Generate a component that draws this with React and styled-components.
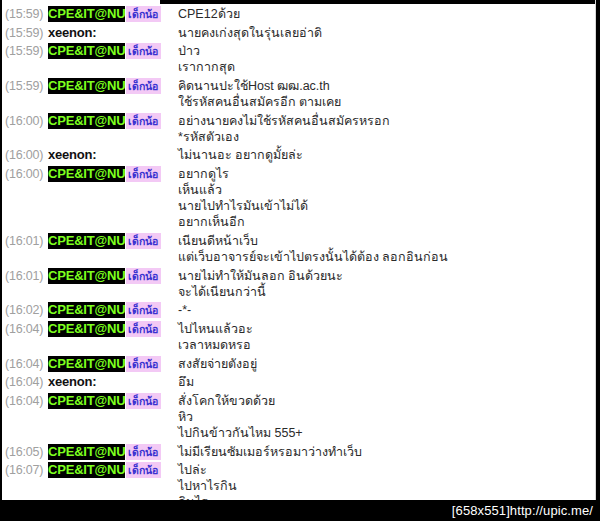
import React from 'react';
import styled, { createGlobalStyle } from 'styled-components';

const GlobalStyle = createGlobalStyle`
  html, body {
    margin: 0;
    padding: 0;
    background: #000000;
  }
`;

const Frame = styled.div`
  width: 600px;
  height: 521px;
  background: #000000;
  display: flex;
  flex-direction: column;
  overflow: hidden;
`;

const Panel = styled.div`
  height: 500px;
  margin-right: 4px;
  background: #ffffff;
  border-left: 2px solid #000000;
  border-right: 1px solid #d8d8d8;
  overflow: hidden;
  display: flex;
  flex-direction: column;
`;

const TopEdge = styled.div`
  display: flex;
  height: 4px;
  flex-shrink: 0;
`;

const TopBlack = styled.div`
  flex: 1;
  margin-left: 158px;
  margin-right: -1px;
  background: #000000;
`;

const Log = styled.div`
  padding-top: 2px;
  display: flex;
  flex-direction: column;
  gap: 2.7px;
`;

const Row = styled.div`
  display: grid;
  grid-template-columns: 46px 130px 1fr;
  line-height: 16px;
`;

const Time = styled.span`
  padding-left: 3px;
  height: 16px;
  color: #a0a0a0;
  font-family: 'Liberation Sans', Arial, sans-serif;
  font-size: 12.5px;
  letter-spacing: -0.2px;
`;

const Who = styled.div`
  display: flex;
  align-items: flex-start;
  gap: 1px;
  height: 16px;
`;

const Nick = styled.span`
  display: inline-block;
  height: 16px;
  line-height: 16px;
  background: ${p => (p.$tagged ? '#000000' : 'transparent')};
  color: ${p => (p.$tagged ? '#7dff1e' : '#111111')};
  font-family: 'Liberation Sans', Arial, sans-serif;
  font-weight: bold;
  font-size: 13px;
  letter-spacing: -0.2px;
`;

const Tag = styled.span`
  display: inline-block;
  height: 16px;
  line-height: 16px;
  padding: 0 3px 0 2px;
  white-space: nowrap;
  background: #f3c9f5;
  color: #3a32d0;
  font-family: Tahoma, 'DejaVu Sans', sans-serif;
  font-weight: bold;
  font-size: 10.5px;
`;

const Message = styled.div`
  display: flex;
  flex-direction: column;
  color: #2b2b2b;
  font-family: Tahoma, 'Liberation Sans', 'Noto Sans', sans-serif;
  font-size: 12.5px;
`;

const Line = styled.div`
  height: 16px;
  line-height: 16px;
  white-space: nowrap;
`;

const Bottom = styled.div`
  flex: 1;
  display: flex;
  align-items: center;
  justify-content: flex-end;
  padding-right: 7px;
  color: #ffffff;
  font-family: 'Liberation Sans', Arial, sans-serif;
  font-size: 13px;
  letter-spacing: 0.1px;
`;

const CPE = 'CPE&IT@NU';

const messages = [
  { t: '15:59', n: CPE, m: ['CPE12ด้วย'] },
  { t: '15:59', n: 'xeenon:', m: ['นายคงเก่งสุดในรุ่นเลยอ่าดิ'] },
  { t: '15:59', n: CPE, m: ['ป่าว', 'เรากากสุด'] },
  { t: '15:59', n: CPE, m: ['คิดนานปะใช้Host ฒฒ.ac.th', 'ใช้รหัสคนอื่นสมัครอีก ตามเคย'] },
  { t: '16:00', n: CPE, m: ['อย่างนายคงไม่ใช้รหัสคนอื่นสมัครหรอก', '*รหัสตัวเอง'] },
  { t: '16:00', n: 'xeenon:', m: ['ไม่นานอะ อยากดูมั้ยล่ะ'] },
  { t: '16:00', n: CPE, m: ['อยากดูไร', 'เห็นแล้ว', 'นายไปทำไรมันเข้าไม่ได้', 'อยากเห็นอีก'] },
  { t: '16:01', n: CPE, m: ['เนียนดีหน้าเว็บ', 'แต่เว็บอาจารย์จะเข้าไปตรงนั้นได้ต้อง ลอกอินก่อน'] },
  { t: '16:01', n: CPE, m: ['นายไม่ทำให้มันลอก อินด้วยนะ', 'จะได้เนียนกว่านี้'] },
  { t: '16:02', n: CPE, m: ['-*-'] },
  { t: '16:04', n: CPE, m: ['ไปไหนแล้วอะ', 'เวลาหมดหรอ'] },
  { t: '16:04', n: CPE, m: ['สงสัยจ่ายตังอยู่'] },
  { t: '16:04', n: 'xeenon:', m: ['อึม'] },
  { t: '16:04', n: CPE, m: ['สั่งโคกให้ขวดด้วย', 'หิว', 'ไปกินข้าวกันไหม 555+'] },
  { t: '16:05', n: CPE, m: ['ไม่มีเรียนซัมเมอร์หรอมาว่างทำเว็บ'] },
  { t: '16:07', n: CPE, m: ['ไปล่ะ', 'ไปหาไรกิน', 'กินไร'] },
];

export default function App() {
  return (
    <>
      <GlobalStyle />
      <Frame>
        <Panel>
          <TopEdge>
            <TopBlack />
          </TopEdge>
          <Log>
            {messages.map((msg, i) => {
              const tagged = msg.n === CPE;
              return (
                <Row key={i}>
                  <Time>({msg.t})</Time>
                  <Who>
                    <Nick $tagged={tagged}>{msg.n}</Nick>
                    {tagged && <Tag>เด็กน้อ</Tag>}
                  </Who>
                  <Message>
                    {msg.m.map((line, j) => (
                      <Line key={j}>{line}</Line>
                    ))}
                  </Message>
                </Row>
              );
            })}
          </Log>
        </Panel>
        <Bottom>[658x551]http://upic.me/</Bottom>
      </Frame>
    </>
  );
}
